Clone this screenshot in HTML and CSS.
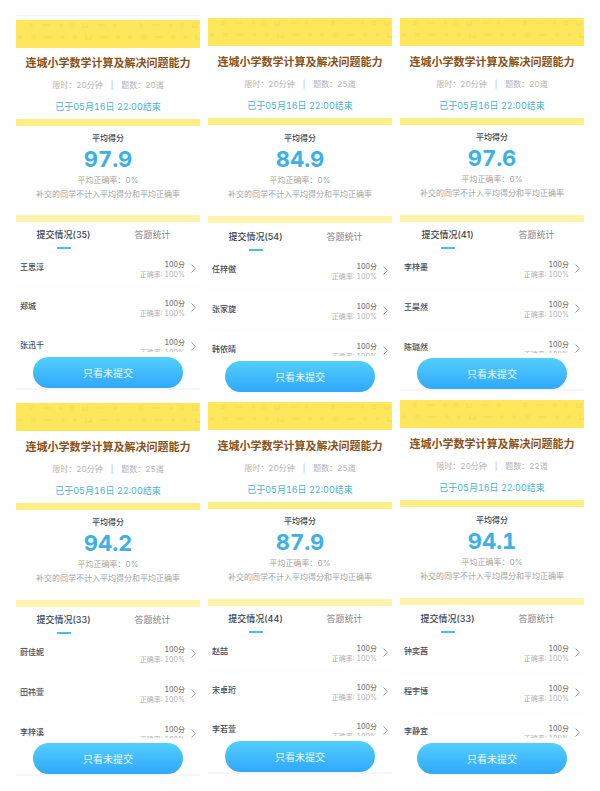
FILE: index.html
```
<!DOCTYPE html>
<html lang="zh-CN">
<head>
  <meta charset="UTF-8">
  <meta name="viewport" content="width=device-width, initial-scale=1.0">
  <title>连城小学数学计算及解决问题能力</title>
  <link rel="stylesheet" href="styles.css">
</head>
<body>
  <svg class="symbols" aria-hidden="true">
    <symbol id="arrow" viewBox="0 0 5 9">
      <path d="M0.8 0.8 L4.3 4.5 L0.8 8.2" fill="none" stroke="currentColor" stroke-width="1" stroke-linecap="round" stroke-linejoin="round" />
    </symbol>
  </svg>

  <main class="board">
    <div class="column">
      <section class="card compact lined-top lined">
        <div class="banner"></div>
        <header class="info">
          <h2 class="title">连城小学数学计算及解决问题能力</h2>
          <p class="meta"><span>限时：20分钟</span><span>|</span><span>题数：20道</span></p>
          <p class="deadline">已于05月16日 22:00结束</p>
        </header>
        <div class="band"></div>
        <div class="summary">
          <p class="label">平均得分</p>
          <p class="score">97.9</p>
          <p class="note">平均正确率：0%</p>
          <p class="note">补交的同学不计入平均得分和平均正确率</p>
        </div>
        <div class="band light"></div>
        <nav class="tabs">
          <button class="tab active">提交情况(35)</button>
          <button class="tab">答题统计</button>
        </nav>
        <ul class="students">
          <li><a class="student" href="#"><span class="name">王思淳</span><span class="result"><b>100分</b><span>正确率: 100%</span></span><svg class="arrow"><use href="#arrow" /></svg></a></li>
          <li><a class="student" href="#"><span class="name">郑城</span><span class="result"><b>100分</b><span>正确率: 100%</span></span><svg class="arrow"><use href="#arrow" /></svg></a></li>
          <li><a class="student" href="#"><span class="name">张迅千</span><span class="result"><b>100分</b><span>正确率: 100%</span></span><svg class="arrow"><use href="#arrow" /></svg></a></li>
        </ul>
        <button class="filter">只看未提交</button>
      </section>

      <section class="card lined">
        <div class="banner"></div>
        <header class="info">
          <h2 class="title">连城小学数学计算及解决问题能力</h2>
          <p class="meta"><span>限时：20分钟</span><span>|</span><span>题数：25道</span></p>
          <p class="deadline">已于05月16日 22:00结束</p>
        </header>
        <div class="band"></div>
        <div class="summary">
          <p class="label">平均得分</p>
          <p class="score">94.2</p>
          <p class="note">平均正确率：0%</p>
          <p class="note">补交的同学不计入平均得分和平均正确率</p>
        </div>
        <div class="band light"></div>
        <nav class="tabs">
          <button class="tab active">提交情况(33)</button>
          <button class="tab">答题统计</button>
        </nav>
        <ul class="students">
          <li><a class="student" href="#"><span class="name">蔚佳妮</span><span class="result"><b>100分</b><span>正确率: 100%</span></span><svg class="arrow"><use href="#arrow" /></svg></a></li>
          <li><a class="student" href="#"><span class="name">田祎萱</span><span class="result"><b>100分</b><span>正确率: 100%</span></span><svg class="arrow"><use href="#arrow" /></svg></a></li>
          <li><a class="student" href="#"><span class="name">李梓溪</span><span class="result"><b>100分</b><span>正确率: 100%</span></span><svg class="arrow"><use href="#arrow" /></svg></a></li>
        </ul>
        <button class="filter">只看未提交</button>
      </section>
    </div>

    <div class="column">
      <section class="card roomy">
        <div class="banner"></div>
        <header class="info">
          <h2 class="title">连城小学数学计算及解决问题能力</h2>
          <p class="meta"><span>限时：20分钟</span><span>|</span><span>题数：25道</span></p>
          <p class="deadline">已于05月16日 22:00结束</p>
        </header>
        <div class="band"></div>
        <div class="summary">
          <p class="label">平均得分</p>
          <p class="score">84.9</p>
          <p class="note">平均正确率：0%</p>
          <p class="note">补交的同学不计入平均得分和平均正确率</p>
        </div>
        <div class="band light"></div>
        <nav class="tabs">
          <button class="tab active">提交情况(54)</button>
          <button class="tab">答题统计</button>
        </nav>
        <ul class="students">
          <li><a class="student" href="#"><span class="name">任梓傲</span><span class="result"><b>100分</b><span>正确率: 100%</span></span><svg class="arrow"><use href="#arrow" /></svg></a></li>
          <li><a class="student" href="#"><span class="name">张家旋</span><span class="result"><b>100分</b><span>正确率: 100%</span></span><svg class="arrow"><use href="#arrow" /></svg></a></li>
          <li><a class="student" href="#"><span class="name">韩依晴</span><span class="result"><b>100分</b><span>正确率: 100%</span></span><svg class="arrow"><use href="#arrow" /></svg></a></li>
        </ul>
        <button class="filter">只看未提交</button>
      </section>

      <section class="card dense lined">
        <div class="banner"></div>
        <header class="info">
          <h2 class="title">连城小学数学计算及解决问题能力</h2>
          <p class="meta"><span>限时：20分钟</span><span>|</span><span>题数：25道</span></p>
          <p class="deadline">已于05月16日 22:00结束</p>
        </header>
        <div class="band"></div>
        <div class="summary">
          <p class="label">平均得分</p>
          <p class="score">87.9</p>
          <p class="note">平均正确率：0%</p>
          <p class="note">补交的同学不计入平均得分和平均正确率</p>
        </div>
        <div class="band light"></div>
        <nav class="tabs">
          <button class="tab active">提交情况(44)</button>
          <button class="tab">答题统计</button>
        </nav>
        <ul class="students">
          <li><a class="student" href="#"><span class="name">赵喆</span><span class="result"><b>100分</b><span>正确率: 100%</span></span><svg class="arrow"><use href="#arrow" /></svg></a></li>
          <li><a class="student" href="#"><span class="name">宋卓珩</span><span class="result"><b>100分</b><span>正确率: 100%</span></span><svg class="arrow"><use href="#arrow" /></svg></a></li>
          <li><a class="student" href="#"><span class="name">李若萱</span><span class="result"><b>100分</b><span>正确率: 100%</span></span><svg class="arrow"><use href="#arrow" /></svg></a></li>
        </ul>
        <button class="filter">只看未提交</button>
      </section>
    </div>

    <div class="column">
      <section class="card lined">
        <div class="banner"></div>
        <header class="info">
          <h2 class="title">连城小学数学计算及解决问题能力</h2>
          <p class="meta"><span>限时：20分钟</span><span>|</span><span>题数：20道</span></p>
          <p class="deadline">已于05月16日 22:00结束</p>
        </header>
        <div class="band"></div>
        <div class="summary">
          <p class="label">平均得分</p>
          <p class="score">97.6</p>
          <p class="note">平均正确率：0%</p>
          <p class="note">补交的同学不计入平均得分和平均正确率</p>
        </div>
        <div class="band light"></div>
        <nav class="tabs">
          <button class="tab active">提交情况(41)</button>
          <button class="tab">答题统计</button>
        </nav>
        <ul class="students">
          <li><a class="student" href="#"><span class="name">李梓墨</span><span class="result"><b>100分</b><span>正确率: 100%</span></span><svg class="arrow"><use href="#arrow" /></svg></a></li>
          <li><a class="student" href="#"><span class="name">王昊然</span><span class="result"><b>100分</b><span>正确率: 100%</span></span><svg class="arrow"><use href="#arrow" /></svg></a></li>
          <li><a class="student" href="#"><span class="name">陈璐然</span><span class="result"><b>100分</b><span>正确率: 100%</span></span><svg class="arrow"><use href="#arrow" /></svg></a></li>
        </ul>
        <button class="filter">只看未提交</button>
      </section>

      <section class="card roomy">
        <div class="banner"></div>
        <header class="info">
          <h2 class="title">连城小学数学计算及解决问题能力</h2>
          <p class="meta"><span>限时：20分钟</span><span>|</span><span>题数：22道</span></p>
          <p class="deadline">已于05月16日 22:00结束</p>
        </header>
        <div class="band"></div>
        <div class="summary">
          <p class="label">平均得分</p>
          <p class="score">94.1</p>
          <p class="note">平均正确率：0%</p>
          <p class="note">补交的同学不计入平均得分和平均正确率</p>
        </div>
        <div class="band light"></div>
        <nav class="tabs">
          <button class="tab active">提交情况(33)</button>
          <button class="tab">答题统计</button>
        </nav>
        <ul class="students">
          <li><a class="student" href="#"><span class="name">钟奕茜</span><span class="result"><b>100分</b><span>正确率: 100%</span></span><svg class="arrow"><use href="#arrow" /></svg></a></li>
          <li><a class="student" href="#"><span class="name">程宇博</span><span class="result"><b>100分</b><span>正确率: 100%</span></span><svg class="arrow"><use href="#arrow" /></svg></a></li>
          <li><a class="student" href="#"><span class="name">李静宜</span><span class="result"><b>100分</b><span>正确率: 100%</span></span><svg class="arrow"><use href="#arrow" /></svg></a></li>
        </ul>
        <button class="filter">只看未提交</button>
      </section>
    </div>
  </main>
</body>
</html>
```
FILE: styles.css
```
* {
  margin: 0;
  padding: 0;
  box-sizing: border-box;
}

body {
  background-color: #fefefe;
  font-family: Inter, "Noto Sans CJK SC", sans-serif;
  font-variant-numeric: tabular-nums;
  color: #444b55;
}

button {
  font-family: inherit;
  border: none;
  background: none;
  cursor: pointer;
}

.symbols {
  display: none;
}

.board {
  display: grid;
  grid-template-columns: repeat(3, 1fr);
  gap: 8px;
  padding: 15px 16px;
}

.column {
  display: flex;
  flex-direction: column;
  gap: 7px;
}

.column:first-child {
  gap: 10px;
}

.column:last-child {
  gap: 6px;
}

/* spacing differs a little between phones */
.card {
  --info-top: 8px;
  --summary-top: 5px;
  --summary-bottom: 15px;
  --tab-top: 5px;
  --row: 40px;
  --list: 104px;
  display: flex;
  flex-direction: column;
  padding-top: 3px;
  background-color: #fff;
}

.card.compact {
  --info-top: 7px;
  --summary-bottom: 14px;
  --row: 39px;
  --list: 103px;
}

.card.dense {
  --row: 39px;
  --list: 103px;
}

.card.roomy {
  --summary-top: 6px;
  --tab-top: 6px;
  --list: 105px;
}

.card.lined-top {
  padding-top: 4px;
  border-top: 1px solid #f3f3f3;
}

.card.lined {
  border-bottom: 2px solid #f6f6f8;
}

.banner {
  height: 28px;
  background-color: #ffe75c;
  background-image: url("data:image/svg+xml,%3Csvg xmlns='http://www.w3.org/2000/svg' width='110' height='28' fill='none' stroke='%23fadf58' stroke-width='2'%3E%3Cpath d='M13 3l4 4m0-4l-4 4M26 5h8M43 5h4m-2-2v4M54 3l4 4m0-4l-4 4M67 3v4h4V3M81 5h8M97 5h4m-2-2v4M4 15v4m-2-2h4M15 15l5 4m0-4l-5 4M28 17h8M45 17h4m-2-2v4M57 17h4m-2-2v4M70 15v4h5v-4M84 17h8M100 17h4m-2-2v4'/%3E%3C/svg%3E");
}

.info {
  display: flex;
  flex-direction: column;
  gap: 6px;
  padding: var(--info-top) 0 4px;
  line-height: 16px;
  text-align: center;
  white-space: nowrap;
}

.title {
  font-size: 11px;
  font-weight: 700;
  color: #875117;
}

.meta {
  display: flex;
  justify-content: center;
  gap: 8px;
  font-size: 8px;
  color: #b3b3b3;
}

.deadline {
  font-size: 9px;
  color: #46b4d2;
}

.band {
  height: 7px;
  background-color: #ffee86;
}

.band.light {
  background-color: #fff3ad;
}

.summary {
  padding: var(--summary-top) 0 var(--summary-bottom);
  font-size: 8px;
  line-height: 14px;
  text-align: center;
  white-space: nowrap;
}

.label {
  font-weight: 500;
  color: #444;
}

.score {
  margin: 1px 0;
  font-size: 22px;
  font-weight: 700;
  line-height: 26px;
  color: #3cb0e8;
}

.note {
  color: #a3a3a3;
}

.tabs {
  display: flex;
  padding: 0 3px;
}

.tab {
  flex: 1;
  display: flex;
  flex-direction: column;
  align-items: center;
  gap: 4px;
  padding-top: var(--tab-top);
  font-size: 9px;
  line-height: 16px;
  color: #85858b;
}

.tab::after {
  content: "";
  width: 14px;
  height: 2px;
}

.tab.active {
  font-weight: 500;
  color: #3b414b;
}

.tab.active::after {
  background-color: #4abce6;
}

/* the third row runs under the button */
.students {
  max-height: var(--list);
  overflow: hidden;
  list-style: none;
}

.student {
  display: flex;
  align-items: center;
  gap: 6px;
  height: var(--row);
  padding: 0 4px;
  border-bottom: 1px solid #fcfcfc;
  color: inherit;
  text-decoration: none;
}

.name {
  flex: 1;
  padding-bottom: 3px;
  font-size: 8px;
  font-weight: 500;
  line-height: 14px;
}

.result {
  display: flex;
  flex-direction: column;
  padding-top: 3px;
  font-size: 7px;
  line-height: 10px;
  text-align: right;
  color: #b0b0b0;
}

.result b {
  font-weight: 500;
  color: #777;
}

.arrow {
  width: 5px;
  height: 9px;
  color: #999;
}

.filter {
  height: 31px;
  margin: 5px 17px 0;
  border-radius: 16px;
  background-image: linear-gradient(#53cffd, #30a8fb);
  font-size: 10px;
  color: #e8f7ff;
}
```
